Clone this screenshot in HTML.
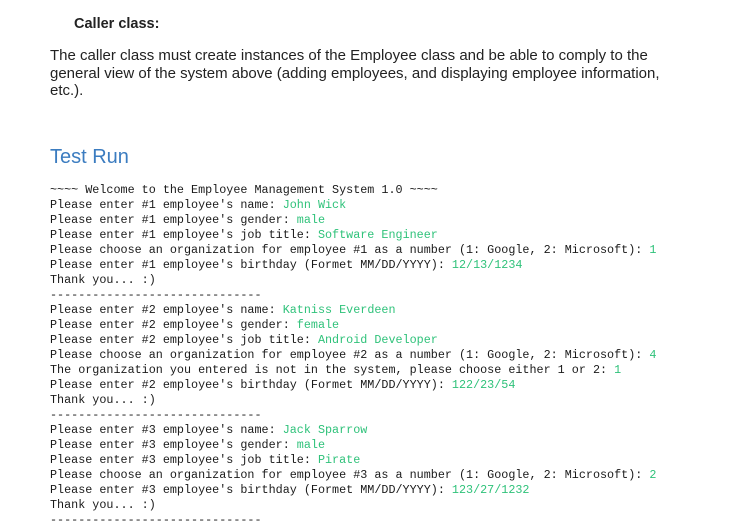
<!DOCTYPE html>
<html><head><style>
body{margin:0;background:#fff;width:731px;height:522px;overflow:hidden;position:relative}
.h{position:absolute;left:74px;top:16px;font:bold 14.5px "Liberation Sans",sans-serif;color:#222}
.p{position:absolute;left:50px;top:47px;width:700px;white-space:nowrap;font:15px/17.5px "Liberation Sans",sans-serif;color:#222}
.t{position:absolute;left:50px;top:146px;font:20px "Liberation Sans",sans-serif;color:#3b7cc0}
pre{position:absolute;left:50px;top:183px;margin:0;font:11.75px/15px "Liberation Mono",monospace;color:#1a1a1a}
g{color:#2fc27a}
</style></head><body>
<div class="h">Caller class:</div>
<div class="p">The caller class must create instances of the Employee class and be able to comply to the<br>general view of the system above (adding employees, and displaying employee information,<br>etc.).</div>
<div class="t">Test Run</div>
<pre>~~~~ Welcome to the Employee Management System 1.0 ~~~~
Please enter #1 employee's name: <g>John Wick</g>
Please enter #1 employee's gender: <g>male</g>
Please enter #1 employee's job title: <g>Software Engineer</g>
Please choose an organization for employee #1 as a number (1: Google, 2: Microsoft): <g>1</g>
Please enter #1 employee's birthday (Formet MM/DD/YYYY): <g>12/13/1234</g>
Thank you... :)
------------------------------
Please enter #2 employee's name: <g>Katniss Everdeen</g>
Please enter #2 employee's gender: <g>female</g>
Please enter #2 employee's job title: <g>Android Developer</g>
Please choose an organization for employee #2 as a number (1: Google, 2: Microsoft): <g>4</g>
The organization you entered is not in the system, please choose either 1 or 2: <g>1</g>
Please enter #2 employee's birthday (Formet MM/DD/YYYY): <g>122/23/54</g>
Thank you... :)
------------------------------
Please enter #3 employee's name: <g>Jack Sparrow</g>
Please enter #3 employee's gender: <g>male</g>
Please enter #3 employee's job title: <g>Pirate</g>
Please choose an organization for employee #3 as a number (1: Google, 2: Microsoft): <g>2</g>
Please enter #3 employee's birthday (Formet MM/DD/YYYY): <g>123/27/1232</g>
Thank you... :)
------------------------------</pre>
</body></html>
